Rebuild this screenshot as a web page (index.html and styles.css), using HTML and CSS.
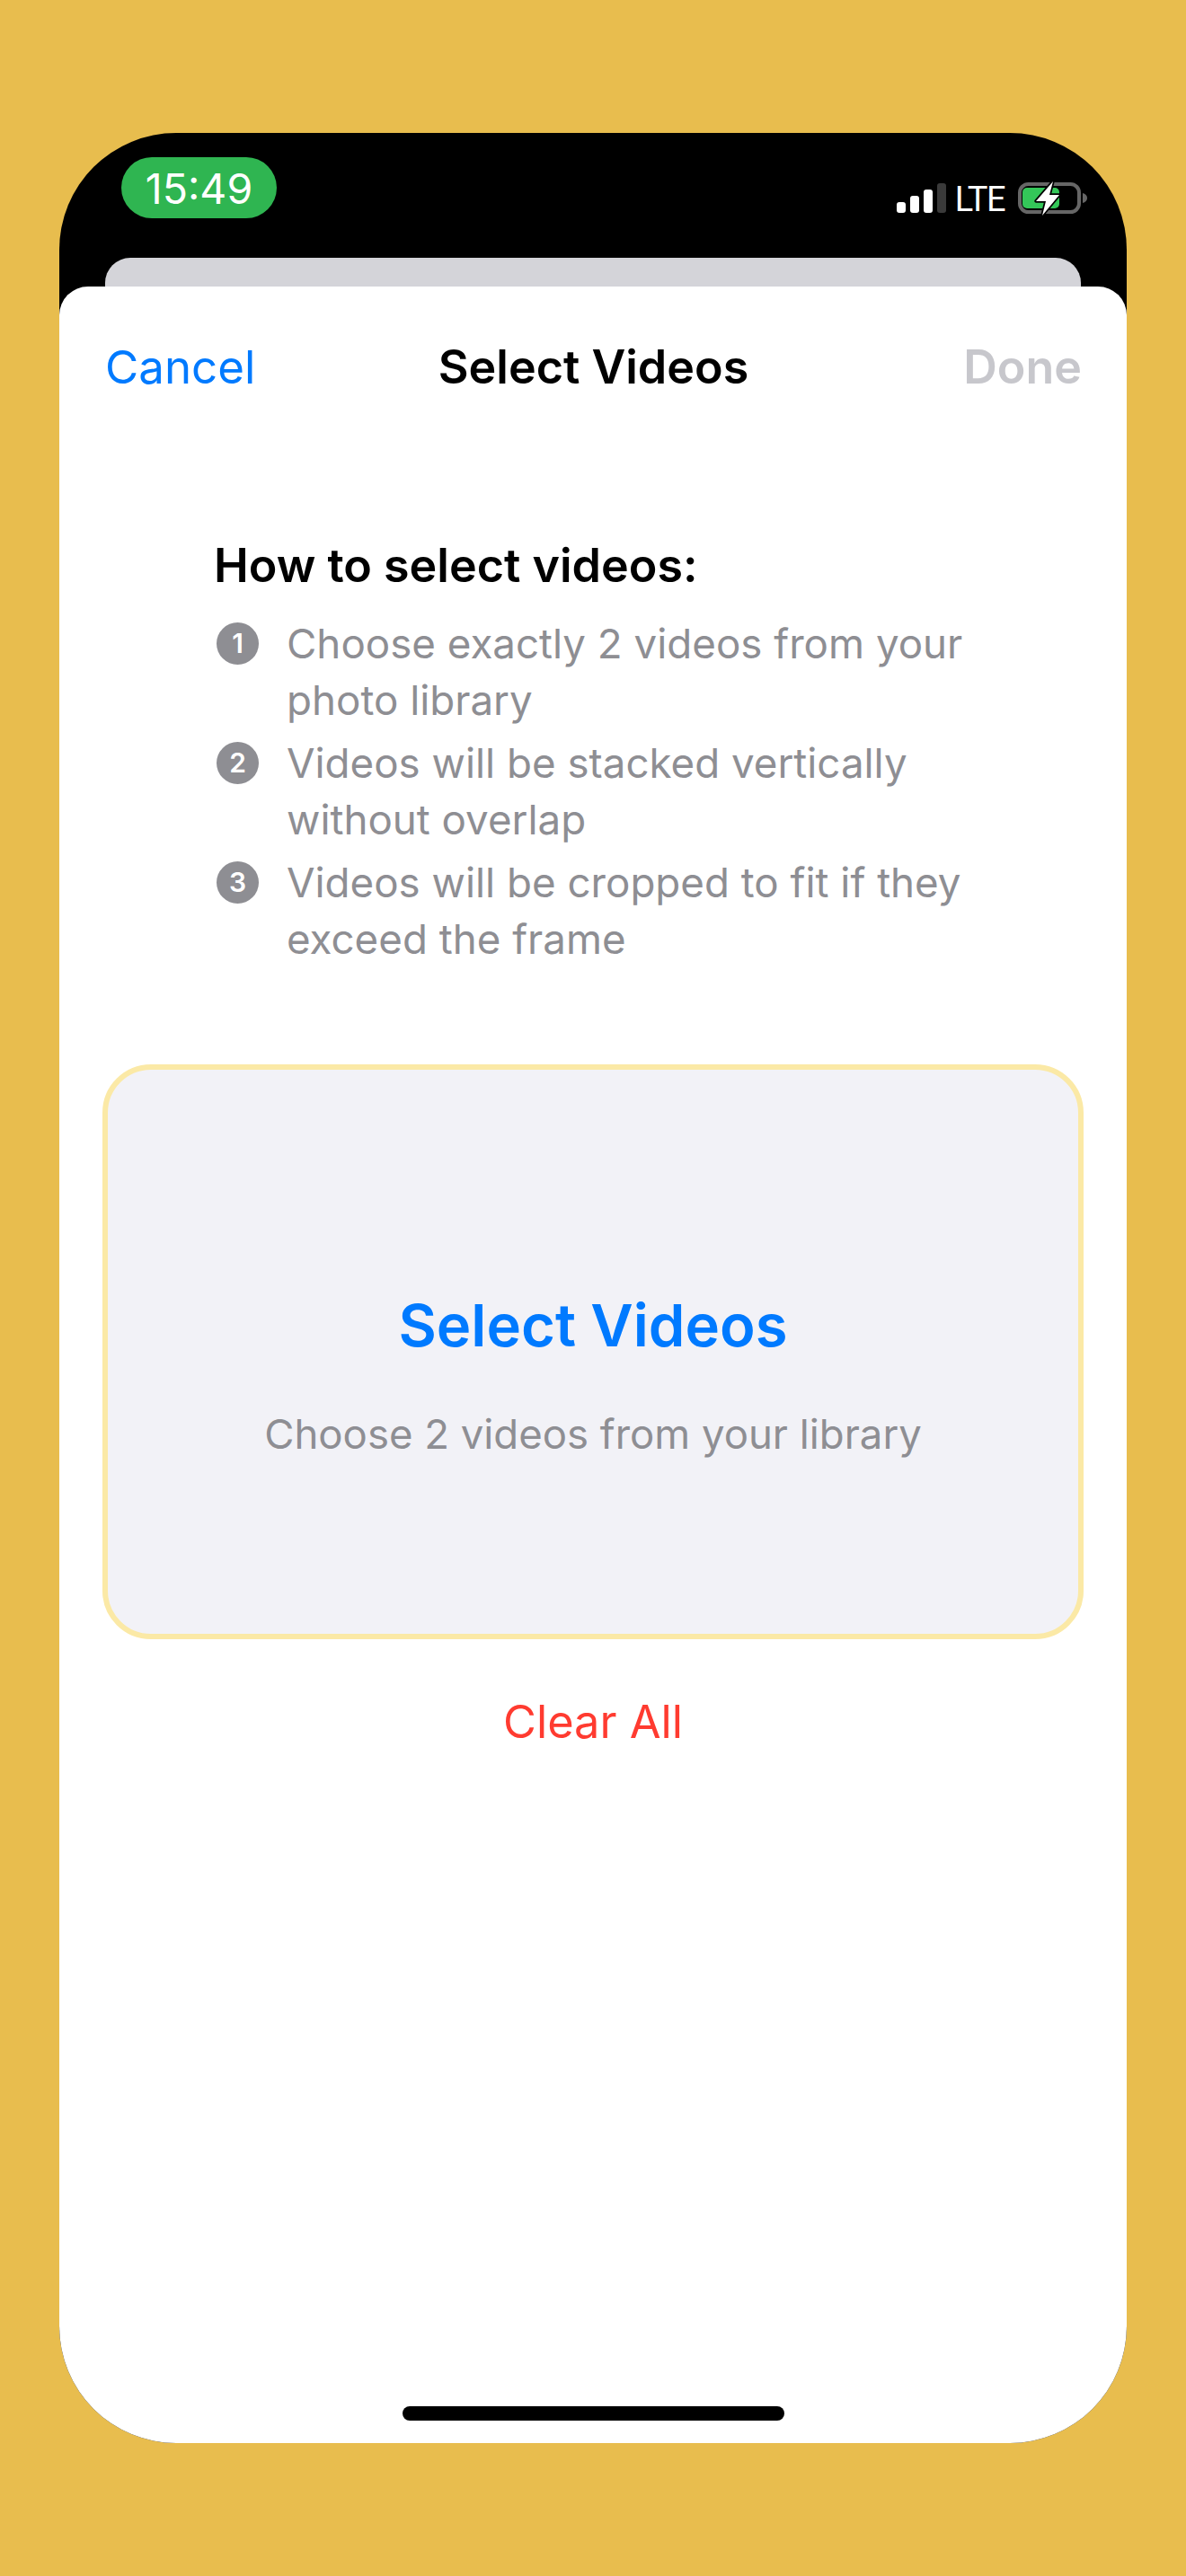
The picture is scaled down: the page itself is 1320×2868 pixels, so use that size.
FILE: index.html
```html
<!DOCTYPE html>
<html lang="en">
<head>
<meta charset="utf-8">
<title>Select Videos</title>
<link rel="stylesheet" href="styles.css">
</head>
<body>
<div class="phone">
  <div class="status">
    <div class="time">15:49</div>
    <div class="status-right">
      <div class="signal">
        <span class="bar bar1"></span>
        <span class="bar bar2"></span>
        <span class="bar bar3"></span>
        <span class="bar bar4"></span>
      </div>
      <span class="lte">LTE</span>
      <svg class="battery" width="78" height="42" viewBox="0 0 78 42" aria-hidden="true">
        <rect x="2" y="5" width="66" height="31" rx="9.5" fill="none" stroke="#666" stroke-width="4"/>
        <rect x="5" y="9" width="41" height="23" rx="5" fill="#34c759"/>
        <path d="M72 15c3 .6 5 2.800 5 5.500s-2 4.900-5 5.500z" fill="#666"/>
        <path d="M39 2 20 24h11l-4 16 19-23H35z" fill="#fff" stroke="#000" stroke-width="3.500" stroke-linejoin="round" paint-order="stroke"/>
      </svg>
    </div>
  </div>
  <div class="peek"></div>
  <div class="sheet">
    <div class="nav">
      <span class="cancel">Cancel</span>
      <span class="title">Select Videos</span>
      <span class="done">Done</span>
    </div>
    <div class="howto">
      <div class="howto-title">How to select videos:</div>
      <div class="step">
        <span class="num">1</span>
        <span class="step-text">Choose exactly 2 videos from your<br>photo library</span>
      </div>
      <div class="step">
        <span class="num">2</span>
        <span class="step-text">Videos will be stacked vertically<br>without overlap</span>
      </div>
      <div class="step">
        <span class="num">3</span>
        <span class="step-text">Videos will be cropped to fit if they<br>exceed the frame</span>
      </div>
    </div>
    <div class="picker">
      <div class="picker-title">Select Videos</div>
      <div class="picker-sub">Choose 2 videos from your library</div>
    </div>
    <div class="clear">Clear All</div>
    <div class="spacer"></div>
    <div class="home"></div>
  </div>
</div>
</body>
</html>
```
FILE: styles.css
```css
* { box-sizing: border-box; }
html, body { margin: 0; height: 2868px; }
body {
  background: #e8bd4e;
  padding: 148px 66px;
  font-family: Inter, "Liberation Sans", sans-serif;
  overflow: hidden;
}
.phone {
  height: 2572px;
  background: #000;
  border-radius: 130px;
  overflow: hidden;
  display: flex;
  flex-direction: column;
}
.status {
  height: 139px;
  flex: none;
  display: flex;
  justify-content: space-between;
  align-items: flex-start;
  padding: 27px 43px 0 69px;
}
.time {
  width: 173px;
  height: 68px;
  padding-top: 1px;
  border-radius: 34px;
  background: #2fb551;
  color: #fff;
  font-size: 46.500px;
  line-height: 68px;
  text-align: center;
}
.status-right {
  display: flex;
  align-items: flex-end;
  margin-top: 25px;
  height: 42px;
}
.signal {
  display: flex;
  align-items: flex-end;
  gap: 5px;
  height: 34px;
  margin-bottom: 5px;
}
.bar { width: 10px; background: #fff; border-radius: 3px; }
.bar1 { height: 12px; }
.bar2 { height: 19px; }
.bar3 { height: 26px; }
.bar4 { height: 33px; background: #3a3a3a; }
.lte {
  color: #fff;
  font-family: Roboto, sans-serif;
  font-size: 38px;
  letter-spacing: -1.500px;
  line-height: 42px;
  margin: 0 15px 0 10px;
  position: relative;
  top: 1px;
}
.battery { display: block; }
.peek {
  flex: none;
  height: 32px;
  margin: 0 51px;
  background: #d4d4d9;
  border-radius: 28px 28px 0 0;
}
.sheet {
  flex: 1;
  background: #fff;
  border-radius: 32px 32px 0 0;
  display: flex;
  flex-direction: column;
  align-items: center;
  padding: 0 48px 25px;
}
.nav {
  width: 100%;
  display: grid;
  grid-template-columns: 1fr auto 1fr;
  align-items: center;
  height: 60px;
  margin-top: 58px;
  padding: 0 2px 0 3px;
  font-size: 51px;
}
.cancel { color: #007aff; }
.title { color: #000; font-weight: 600; font-size: 52px; }
.done { color: #c7c7cc; font-weight: 600; font-size: 52px; text-align: right; }
.howto {
  width: 100%;
  padding-left: 124px;
  margin-top: 163px;
}
.howto-title {
  font-size: 52px;
  font-weight: 600;
  line-height: 60px;
  color: #000;
  margin-bottom: 25px;
}
.step {
  display: flex;
  align-items: flex-start;
  gap: 31px;
  margin-bottom: 7px;
}
.num {
  flex: none;
  width: 47px;
  height: 47px;
  border-radius: 50%;
  margin: 8px 0 0 3px;
  background: #8e8e93;
  color: #fff;
  font-size: 30px;
  font-weight: 600;
  line-height: 47px;
  text-align: center;
}
.step-text {
  font-size: 45.700px;
  line-height: 63px;
  color: #8e8e93;
}
.picker {
  width: 100%;
  height: 640px;
  margin-top: 101px;
  flex: none;
  background: #f2f2f7;
  border: 6px solid #fbe9a6;
  border-radius: 54px;
  display: flex;
  flex-direction: column;
  align-items: center;
}
.picker-title {
  margin-top: 245px;
  font-size: 65.200px;
  line-height: 80px;
  font-weight: 600;
  color: #007aff;
}
.picker-sub {
  margin-top: 51px;
  font-size: 45.500px;
  line-height: 60px;
  color: #8e8e93;
}
.clear {
  margin-top: 62px;
  font-size: 50.500px;
  line-height: 60px;
  color: #ff3b30;
}
.spacer { flex: 1; }
.home {
  width: 425px;
  height: 16px;
  border-radius: 8px;
  background: #000;
}
```
